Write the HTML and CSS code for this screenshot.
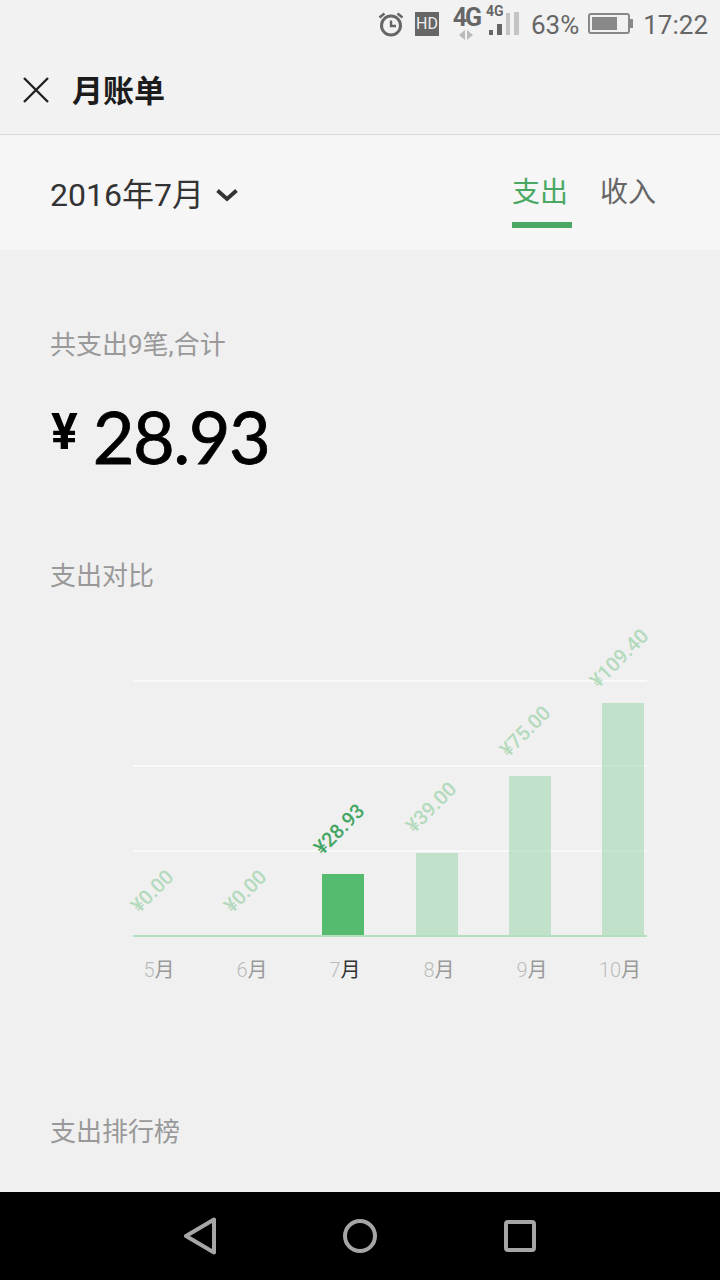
FILE: index.html
```html
<!DOCTYPE html>
<html lang="zh-CN">
<head>
    <meta charset="UTF-8">
    <meta name="viewport" content="width=device-width, initial-scale=1.0">
    <title>月账单</title>
    <link rel="stylesheet" href="styles.css">
</head>
<body>
    <div class="screen">
        <!-- Status Bar -->
        <div class="status-bar">
            <svg class="alarm" width="26" height="26" viewBox="0 0 26 26">
                <circle cx="13" cy="14.5" r="9.5" fill="none" stroke="#666" stroke-width="3"/>
                <path d="M13 9.5v5.5h5" fill="none" stroke="#666" stroke-width="2.4"/>
                <path d="M1.5 6.5l5-4M24.5 6.5l-5-4" fill="none" stroke="#666" stroke-width="2.6"/>
            </svg>
            <span class="hd">HD</span>
            <div class="net-main">
                <span class="net-big">4G</span>
                <svg width="16" height="10" viewBox="0 0 16 10">
                    <path d="M7 0v10L1 5zM9 0v10l6-5z" fill="#bbb"/>
                </svg>
            </div>
            <div class="net-second">
                <span class="net-small">4G</span>
                <div class="signal">
                    <i class="sig s1"></i><i class="sig s2"></i><i class="sig s3 off"></i><i class="sig s4 off"></i>
                </div>
            </div>
            <span class="st-text pct">63%</span>
            <div class="battery"><div class="battery-fill"></div></div>
            <span class="st-text clock">17:22</span>
        </div>

        <!-- App Bar -->
        <div class="app-bar">
            <svg class="close" width="26" height="26" viewBox="0 0 26 26">
                <path d="M1 1l24 24M25 1L1 25" fill="none" stroke="#222" stroke-width="2.4"/>
            </svg>
            <h1>月账单</h1>
        </div>

        <!-- Month and Tabs -->
        <div class="tab-bar">
            <div class="month">
                <span>2016年7月</span>
                <svg class="chevron" width="22" height="14" viewBox="0 0 22 14">
                    <path d="M1.5 2.5l9.5 8.5 9.5-8.5" fill="none" stroke="#333" stroke-width="3.8"/>
                </svg>
            </div>
            <div class="tabs">
                <div class="tab active">支出</div>
                <div class="tab">收入</div>
            </div>
        </div>

        <!-- Content -->
        <div class="content">
            <div class="label total-label">共支出9笔,合计</div>
            <div class="amount"><span class="yen">¥</span><span class="num">28.93</span></div>
            <div class="label compare-label">支出对比</div>

            <svg class="chart" width="720" height="390" viewBox="0 620 720 390">
                <g class="grid">
                    <rect x="133" y="680" width="514" height="2"/>
                    <rect x="133" y="765" width="514" height="2"/>
                    <rect x="133" y="850" width="514" height="2"/>
                </g>
                <rect class="bar current" x="322" y="874" width="42" height="62"/>
                <rect class="bar" x="416" y="853" width="42" height="83"/>
                <rect class="bar" x="509" y="776" width="42" height="160"/>
                <rect class="bar" x="602" y="703" width="42" height="233"/>
                <rect class="baseline" x="133" y="935" width="514" height="2"/>

                <g class="values">
                    <text transform="translate(152 891) rotate(-45)" dy="7">¥0.00</text>
                    <text transform="translate(245 891) rotate(-45)" dy="7">¥0.00</text>
                    <text class="current" transform="translate(339 829) rotate(-45)" dy="7">¥28.93</text>
                    <text transform="translate(431 807) rotate(-45)" dy="7">¥39.00</text>
                    <text transform="translate(525 731) rotate(-45)" dy="7">¥75.00</text>
                    <text transform="translate(619 658) rotate(-45)" dy="7">¥109.40</text>
                </g>

                <g class="months">
                    <text x="159" y="977"><tspan class="dim">5</tspan>月</text>
                    <text x="252" y="977"><tspan class="dim">6</tspan>月</text>
                    <text class="current" x="345" y="977"><tspan class="dim">7</tspan>月</text>
                    <text x="439" y="977"><tspan class="dim">8</tspan>月</text>
                    <text x="532" y="977"><tspan class="dim">9</tspan>月</text>
                    <text x="620" y="977"><tspan class="dim">10</tspan>月</text>
                </g>
            </svg>

            <div class="label rank-label">支出排行榜</div>
        </div>

        <!-- Nav Bar -->
        <div class="nav-bar">
            <svg width="32" height="38" viewBox="0 0 32 38">
                <path d="M30 2.5v33L2 19z" fill="none" stroke="#a6a6a6" stroke-width="4" stroke-linejoin="round"/>
            </svg>
            <svg width="34" height="34" viewBox="0 0 34 34">
                <circle cx="17" cy="17" r="15" fill="none" stroke="#a6a6a6" stroke-width="4"/>
            </svg>
            <svg width="32" height="32" viewBox="0 0 32 32">
                <rect x="2" y="2" width="28" height="28" rx="2" fill="none" stroke="#a6a6a6" stroke-width="4"/>
            </svg>
        </div>
    </div>
</body>
</html>
```

FILE: styles.css
```css
/* Base Styles */
* {
    margin: 0;
    padding: 0;
    box-sizing: border-box;
}
body {
    width: 720px;
    height: 1280px;
    overflow: hidden;
    background-color: #f0f0f0;
    font-family: Roboto, "Noto Sans CJK SC", sans-serif;
}
.screen {
    display: flex;
    flex-direction: column;
    width: 720px;
    height: 1280px;
}
/* Status Bar */
.status-bar {
    display: flex;
    align-items: center;
    justify-content: flex-end;
    height: 50px;
    padding-right: 12px;
    background-color: #f2f2f2;
    color: #666;
}
.alarm {
    margin-right: 11px;
    margin-bottom: 3px;
}
.hd {
    width: 24px;
    height: 24px;
    margin-right: 14px;
    margin-bottom: 2px;
    background-color: #666;
    color: #eee;
    font-size: 16px;
    line-height: 24px;
    text-align: center;
}
.net-main {
    display: flex;
    flex-direction: column;
    align-items: center;
    width: 27px;
    height: 34px;
    margin-right: 6px;
    margin-bottom: 4px;
}
.net-big {
    font-size: 25px;
    font-weight: 700;
    line-height: 24px;
    letter-spacing: -2px;
}
.net-second {
    position: relative;
    width: 32px;
    height: 30px;
    margin-right: 13px;
    margin-bottom: 10px;
}
.net-small {
    position: absolute;
    left: 0;
    top: -2px;
    font-size: 14px;
    font-weight: 700;
    line-height: 16px;
}
.signal {
    position: absolute;
    left: 3px;
    bottom: 0;
    display: flex;
    align-items: flex-end;
    gap: 4px;
}
.sig {
    display: block;
    width: 4.5px;
    background-color: #666;
}
.sig.off {
    background-color: #c4c4c4;
}
.s1 { height: 5px; }
.s2 { height: 11px; }
.s3 { height: 22px; }
.s4 { height: 23px; }
.st-text {
    font-size: 26px;
}
.pct {
    margin-right: 9px;
}
.clock {
    margin-left: 13px;
}
.battery {
    position: relative;
    width: 42px;
    height: 21px;
    margin-bottom: 3px;
    padding: 2px;
    border: 2px solid #888;
    border-radius: 3px;
}
.battery::after {
    content: "";
    position: absolute;
    right: -5px;
    top: 4px;
    width: 3px;
    height: 9px;
    background-color: #888;
}
.battery-fill {
    width: 25px;
    height: 100%;
    background-color: #888;
}
/* App Bar */
.app-bar {
    display: flex;
    align-items: center;
    height: 85px;
    padding-left: 23px;
    padding-bottom: 5px;
    background-color: #f2f2f2;
    border-bottom: 1px solid #d9d9d9;
}
.close {
    margin-right: 23px;
}
.app-bar h1 {
    margin-bottom: 2px;
    font-size: 31px;
    font-weight: 700;
    color: #1c1c1c;
}
/* Month and Tabs */
.tab-bar {
    display: flex;
    justify-content: space-between;
    height: 115px;
    padding: 0 60px 0 50px;
    background-color: #f6f6f6;
}
.month {
    display: flex;
    align-items: center;
    gap: 12px;
    height: 114px;
    font-size: 32px;
    color: #333;
}
.chevron {
    margin-top: 6px;
}
.tabs {
    display: flex;
    gap: 28px;
}
.tab {
    width: 60px;
    height: 93px;
    padding-top: 38px;
    font-size: 28px;
    line-height: 40px;
    color: #666;
}
.tab.active {
    color: #4aa864;
    border-bottom: 6px solid #4aa864;
}
/* Content */
.content {
    flex: 1;
    padding-left: 50px;
    overflow: hidden;
}
.label {
    font-size: 26px;
    line-height: 36px;
    color: #999;
}
.total-label {
    margin-top: 77px;
}
.amount {
    display: flex;
    align-items: flex-start;
    height: 115px;
    margin-top: 30px;
    color: #000;
}
.yen {
    margin-top: 9px;
    margin-left: 1px;
    margin-right: 15px;
    font-size: 50px;
    font-weight: 700;
    line-height: 60px;
}
.num {
    font-family: Lato, sans-serif;
    font-size: 72px;
    line-height: 86px;
    letter-spacing: -1.5px;
    -webkit-text-stroke: 0.8px #000;
}
.compare-label {
    margin-top: 50px;
}
/* Chart */
.chart {
    display: block;
    margin-left: -50px;
    margin-top: 26px;
}
.grid rect {
    fill: #f9f9f9;
}
.bar {
    fill: #a9d8b6;
    fill-opacity: 0.65;
}
.bar.current {
    fill: #54bb6f;
    fill-opacity: 1;
}
.baseline {
    fill: #b4e0c0;
}
.values text {
    font-size: 20px;
    font-weight: 500;
    text-anchor: middle;
    fill: #b4dabd;
}
.values text.current {
    fill: #44a565;
}
.months text {
    font-size: 20px;
    text-anchor: middle;
    fill: #999;
}
.months text.current {
    fill: #333;
}
.months .dim {
    font-weight: 300;
    fill: #bbb;
}
.rank-label {
    margin-top: 104px;
}
/* Nav Bar */
.nav-bar {
    display: flex;
    align-items: center;
    justify-content: center;
    gap: 127px;
    height: 88px;
    background-color: #000;
}
```
